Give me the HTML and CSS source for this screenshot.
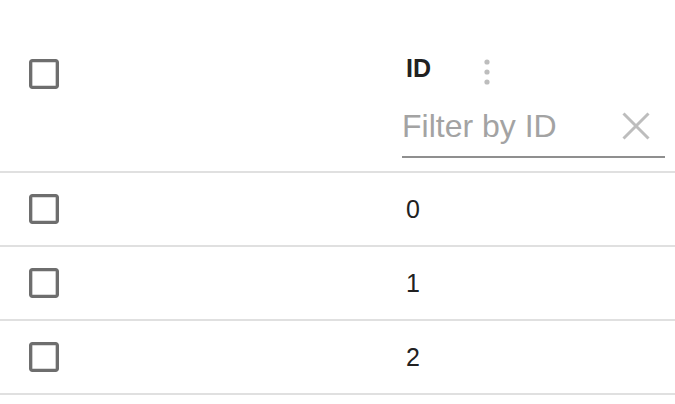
FILE: index.html
```html
<!DOCTYPE html>
<html>
<head>
<meta charset="utf-8">
<link rel="stylesheet" href="styles.css">
</head>
<body>
<div class="grid">
  <div class="header">
    <div class="cb-cell head-cb">
      <svg class="cb" viewBox="0 0 24 24" width="40" height="40"><path d="M19 5v14H5V5h14m0-2H5c-1.11 0-2 .9-2 2v14c0 1.1.89 2 2 2h14c1.11 0 2-.9 2-2V5c0-1.1-.89-2-2-2z"/></svg>
    </div>
    <div class="id-head">
      <div class="title-row">
        <span class="title">ID</span>
        <svg class="kebab" width="10" height="32" viewBox="0 0 10 32"><circle cx="5" cy="9" r="2.6"/><circle cx="5" cy="19" r="2.6"/><circle cx="5" cy="29" r="2.6"/></svg>
      </div>
      <div class="filter">
        <input class="filter-input" type="text" placeholder="Filter by ID">
        <svg class="clear" width="28" height="28" viewBox="0 0 28 28"><path d="M1.5 1.5 L26.5 26.5 M26.5 1.5 L1.5 26.5"/></svg>
      </div>
    </div>
  </div>
  <div class="row">
    <div class="cb-cell"><svg class="cb" viewBox="0 0 24 24" width="40" height="40"><path d="M19 5v14H5V5h14m0-2H5c-1.11 0-2 .9-2 2v14c0 1.1.89 2 2 2h14c1.11 0 2-.9 2-2V5c0-1.1-.89-2-2-2z"/></svg></div>
    <div class="cell">0</div>
  </div>
  <div class="row">
    <div class="cb-cell"><svg class="cb" viewBox="0 0 24 24" width="40" height="40"><path d="M19 5v14H5V5h14m0-2H5c-1.11 0-2 .9-2 2v14c0 1.1.89 2 2 2h14c1.11 0 2-.9 2-2V5c0-1.1-.89-2-2-2z"/></svg></div>
    <div class="cell">1</div>
  </div>
  <div class="row">
    <div class="cb-cell"><svg class="cb" viewBox="0 0 24 24" width="40" height="40"><path d="M19 5v14H5V5h14m0-2H5c-1.11 0-2 .9-2 2v14c0 1.1.89 2 2 2h14c1.11 0 2-.9 2-2V5c0-1.1-.89-2-2-2z"/></svg></div>
    <div class="cell">2</div>
  </div>
</div>
</body>
</html>
```
FILE: styles.css
```css
html, body {
  margin: 0;
  padding: 0;
  background: #ffffff;
}
body {
  font-family: "Liberation Sans", Arial, sans-serif;
  color: #212121;
  overflow: hidden;
}
.grid {
  width: 675px;
}
.header, .row {
  display: grid;
  grid-template-columns: 402px minmax(0, 1fr);
  border-bottom: 2px solid #e0e0e0;
}
.header {
  height: 171px;
}
.row {
  height: 72px;
  align-items: center;
}
.cb-cell {
  padding-left: 24px;
  display: flex;
  align-items: center;
}
.head-cb {
  align-items: flex-start;
  padding-top: 54px;
}
.cb {
  display: block;
  fill: #6e6e6e;
}
.id-head {
  min-width: 0;
  padding-top: 53px;
  padding-right: 10px;
  display: flex;
  flex-direction: column;
}
.title-row {
  display: flex;
  align-items: flex-start;
  height: 30px;
}
.title {
  font-weight: bold;
  font-size: 25px;
  line-height: 30px;
  width: 76px;
  padding-left: 4px;
}
.kebab {
  display: block;
  fill: #bdbdbd;
}
.filter {
  margin-top: 23px;
  display: flex;
  align-items: flex-start;
  padding-bottom: 10px;
  border-bottom: 2px solid #8f8f8f;
}
.filter-input {
  flex: 1 1 0;
  width: 0;
  min-width: 0;
  height: 40px;
  border: none;
  outline: none;
  padding: 0;
  margin: 0;
  background: transparent;
  font-family: "Liberation Sans", Arial, sans-serif;
  font-size: 32px;
  line-height: 40px;
  color: #212121;
}
.filter-input::placeholder {
  color: #a3a3a3;
  opacity: 1;
}
.clear {
  display: block;
  flex: none;
  margin-top: 6px;
  margin-right: 15px;
  stroke: #bdbdbd;
  stroke-width: 3;
  fill: none;
}
.cell {
  font-size: 25px;
  padding-left: 4px;
  line-height: 30px;
}
```
